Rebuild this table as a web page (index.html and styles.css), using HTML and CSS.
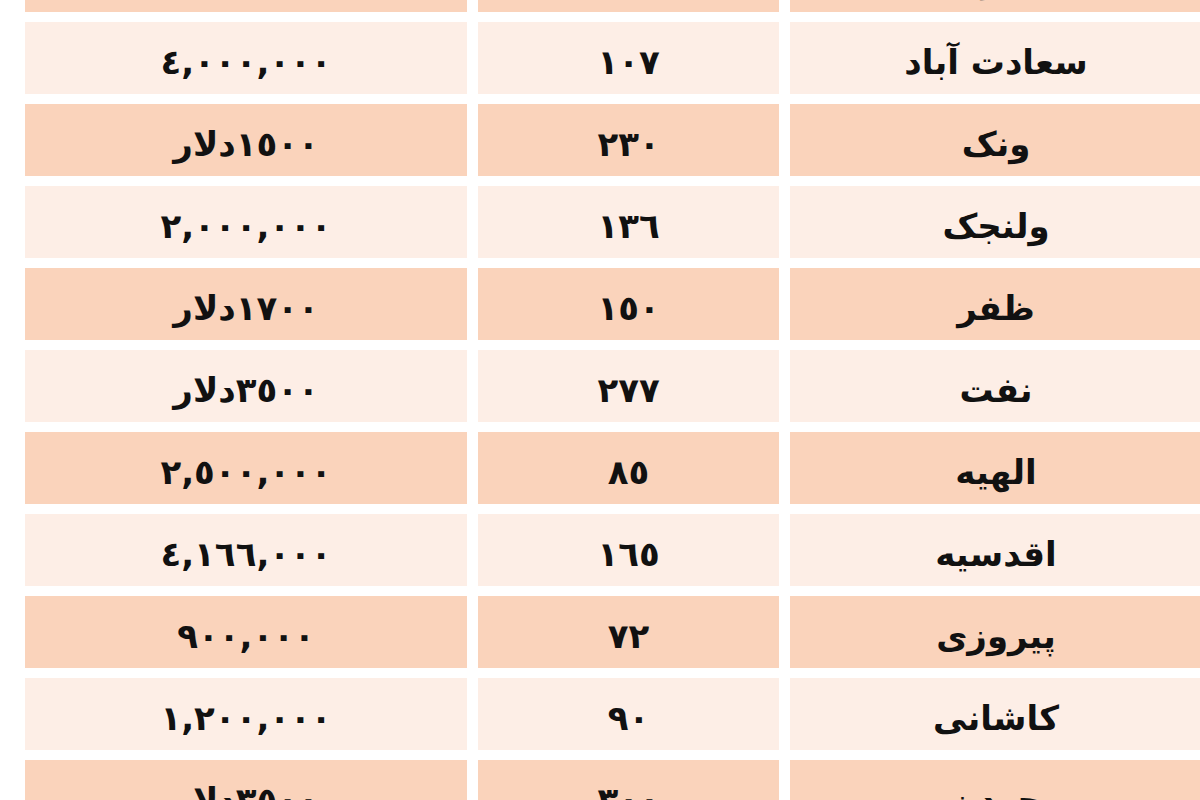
FILE: index.html
```html
<!DOCTYPE html>
<html lang="fa">
<head>
<meta charset="utf-8">
<title>جدول قیمت</title>
<link rel="stylesheet" href="styles.css">
</head>
<body>
<div class="table">
  <div class="cell dark">٣,٢٠٠,٠٠٠</div><div class="cell dark">٩٥</div><div class="cell dark">زعفرانیه</div>

  <div class="cell light">٤,٠٠٠,٠٠٠</div><div class="cell light">١٠٧</div><div class="cell light">سعادت آباد</div>
  <div class="cell dark">١٥٠٠دلار</div><div class="cell dark">٢٣٠</div><div class="cell dark">ونک</div>
  <div class="cell light">٢,٠٠٠,٠٠٠</div><div class="cell light">١٣٦</div><div class="cell light">ولنجک</div>
  <div class="cell dark">١٧٠٠دلار</div><div class="cell dark">١٥٠</div><div class="cell dark">ظفر</div>
  <div class="cell light">٣٥٠٠دلار</div><div class="cell light">٢٧٧</div><div class="cell light">نفت</div>
  <div class="cell dark">٢,٥٠٠,٠٠٠</div><div class="cell dark">٨٥</div><div class="cell dark">الهیه</div>
  <div class="cell light">٤,١٦٦,٠٠٠</div><div class="cell light">١٦٥</div><div class="cell light">اقدسیه</div>
  <div class="cell dark">٩٠٠,٠٠٠</div><div class="cell dark">٧٢</div><div class="cell dark">پیروزی</div>
  <div class="cell light">١,٢٠٠,٠٠٠</div><div class="cell light">٩٠</div><div class="cell light">کاشانی</div>
  <div class="cell dark">٣٥٠٠دلار</div><div class="cell dark">٣٠٠</div><div class="cell dark">جردن</div>
</div>
</body>
</html>
```

FILE: styles.css
```css
html, body {
  margin: 0;
  padding: 0;
  background: #ffffff;
  overflow: hidden;
}

.table {
  display: grid;
  grid-template-columns: 442px 301px 412px;
  grid-auto-rows: 72px;
  column-gap: 11px;
  row-gap: 10px;
  margin-top: -60px;
  padding-left: 25px;
  width: 1200px;
}

.cell {
  display: flex;
  align-items: center;
  justify-content: center;
  padding-top: 8px;
  box-sizing: border-box;
  direction: rtl;
  font-family: "DejaVu Sans", "Noto Sans", sans-serif;
  font-weight: bold;
  font-size: 34px;
  color: #111111;
  white-space: nowrap;
}

.light {
  background: #fdeee6;
}

.dark {
  background: #fad3bb;
}
```
